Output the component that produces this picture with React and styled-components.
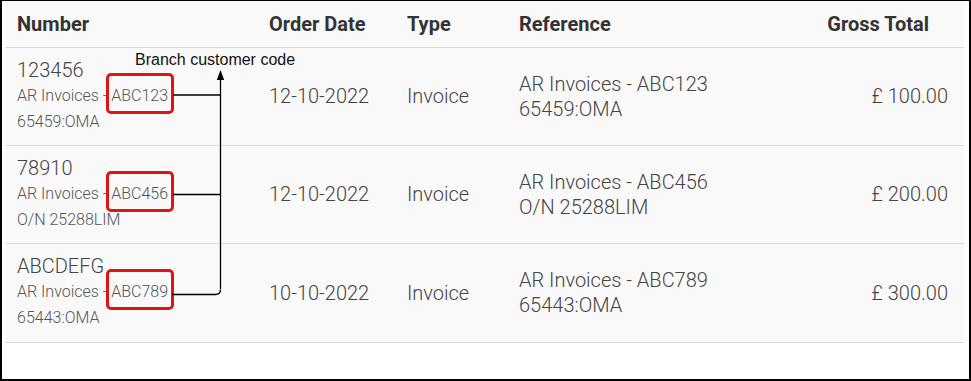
import React from 'react';
import styled, { createGlobalStyle } from 'styled-components';

const GlobalStyle = createGlobalStyle`
	body {
		margin: 0;
		background: #fff;
		font-family: 'Roboto', 'Liberation Sans', sans-serif;
	}
`

const Frame = styled.div`
	position: relative;
	box-sizing: border-box;
	width: 971px;
	height: 381px;
	border-style: solid;
	border-color: #000;
	border-width: 1px 2px 2px 2px;
	padding: 0 5px 0 3px;
	background: #fff;
`

const Table = styled.div`
	display: grid;
	grid-template-columns: 252px 138px 112px 1fr 160px;
	background: #f9f9f9;
	color: #444;
`

const HeadCell = styled.div`
	height: 46px;
	display: flex;
	align-items: center;
	justify-content: ${p => (p.$right ? 'flex-end' : 'flex-start')};
	padding: ${p => (p.$right ? '0 35px 0 0' : '0 12px')};
	border-bottom: 1px solid #dcdcdc;
	font-size: 20px;
	font-weight: 700;
	color: #333;
`

const Cell = styled.div`
	box-sizing: border-box;
	height: ${p => (p.$last ? '99px' : '98px')};
	display: flex;
	flex-direction: column;
	justify-content: center;
	align-items: ${p => (p.$right ? 'flex-end' : 'flex-start')};
	padding: 0 ${p => (p.$right ? '16px' : '12px')} 0 12px;
	border-bottom: 1px solid #dcdcdc;
	font-size: 20px;
	font-weight: 300;
	line-height: 25px;
`

const NumberCell = styled(Cell)`
	justify-content: flex-start;
	padding-top: 9px;
`

const MainLine = styled.div`
	font-size: 20px;
	line-height: 26px;
	color: #444;
`

const SubLine = styled.div`
	font-size: 16px;
	line-height: 26px;
	color: #555;
`

const Code = styled.span`
	position: relative;
	&::after {
		content: '';
		position: absolute;
		top: -13px;
		bottom: -9px;
		left: -5px;
		right: -6px;
		border: 3px solid #e01414;
		border-radius: 5px;
	}
`

const Note = styled.div`
	position: absolute;
	left: 133px;
	top: 50px;
	font-family: 'Liberation Sans', Arial, sans-serif;
	font-size: 16px;
	line-height: 18px;
	color: #111;
`

const Overlay = styled.svg`
	position: absolute;
	left: -2px;
	top: -1px;
	pointer-events: none;
`

const rows = [
	{ number: '123456', code: 'ABC123', extra: '65459:OMA', date: '12-10-2022', ref: '65459:OMA', total: '£ 100.00' },
	{ number: '78910', code: 'ABC456', extra: 'O/N 25288LIM', date: '12-10-2022', ref: 'O/N 25288LIM', total: '£ 200.00' },
	{ number: 'ABCDEFG', code: 'ABC789', extra: '65443:OMA', date: '10-10-2022', ref: '65443:OMA', total: '£ 300.00' },
]

const App = () => {
	return (
		<Frame>
			<GlobalStyle />
			<Table>
				<HeadCell>Number</HeadCell>
				<HeadCell>Order Date</HeadCell>
				<HeadCell>Type</HeadCell>
				<HeadCell>Reference</HeadCell>
				<HeadCell $right>Gross Total</HeadCell>
				{rows.map((r, i) => {
					const last = i === rows.length - 1;
					return (
						<React.Fragment key={r.code}>
							<NumberCell $last={last}>
								<MainLine>{r.number}</MainLine>
								<SubLine>AR Invoices - <Code>{r.code}</Code></SubLine>
								<SubLine>{r.extra}</SubLine>
							</NumberCell>
							<Cell $last={last}>{r.date}</Cell>
							<Cell $last={last}>Invoice</Cell>
							<Cell $last={last}>
								<div>AR Invoices - {r.code}</div>
								<div>{r.ref}</div>
							</Cell>
							<Cell $last={last} $right>{r.total}</Cell>
						</React.Fragment>
					);
				})}
			</Table>
			<Note>Branch customer code</Note>
			<Overlay width="971" height="381" viewBox="0 0 971 381">
				<g fill="none" stroke="#000" strokeWidth="1.3">
					<path d="M220.5 78 V289" />
					<path d="M173 95 H220.5" />
					<path d="M173 194.5 H220.5" />
					<path d="M172 294.5 H215.5 Q220.5 294.5 220.5 289.5" />
				</g>
				<polygon points="220.5,70 216.8,80 224.2,80" fill="#000" />
			</Overlay>
		</Frame>
	);
}

export default App;
